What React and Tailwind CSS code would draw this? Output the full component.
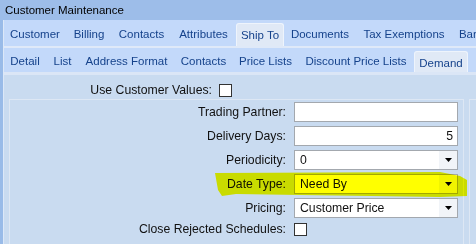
import React from 'react';

const topTabs = [
  { label: 'Customer', w: 'w-[62px]' },
  { label: 'Billing', w: 'w-[46px]' },
  { label: 'Contacts', w: 'w-[59px]' },
  { label: 'Attributes', w: 'w-[65px]' },
  { label: 'Ship To', w: 'w-[48px]', active: true },
  { label: 'Documents', w: 'w-[72px]' },
  { label: 'Tax Exemptions', w: 'w-[96px]' },
  { label: 'Bank Accounts', w: 'w-[90px]' },
];

const subTabs = [
  { label: 'Detail', w: 'w-[42px]' },
  { label: 'List', w: 'w-[33px]' },
  { label: 'Address Format', w: 'w-[95px]' },
  { label: 'Contacts', w: 'w-[59px]' },
  { label: 'Price Lists', w: 'w-[65px]' },
  { label: 'Discount Price Lists', w: 'w-[116px]' },
  { label: 'Demand', w: 'w-[54px]', active: true },
];

const Tab = ({ label, w, active }) =>
  active ? (
    <div
      className={`${w} shrink-0 mt-[3px] -mb-[2px] rounded-t-[3px] bg-[#e0e9f6] border border-b-0 border-[#eef4fc] flex justify-center pt-[3px] text-[#15428b] whitespace-nowrap`}
    >
      {label}
    </div>
  ) : (
    <div className={`${w} shrink-0 flex justify-center items-center pt-[3px] text-[#15428b] whitespace-nowrap`}>
      {label}
    </div>
  );

const Arrow = () => (
  <div className="w-[18px] h-full bg-[#f1f4f8] flex items-center justify-center">
    <svg width="7" height="4" viewBox="0 0 7 4">
      <path d="M0 0h7L3.5 4z" fill="#000" />
    </svg>
  </div>
);

const Field = ({ label, children }) => (
  <div className="flex items-center h-[20px] mb-[4px]">
    <div className="w-[284px] shrink-0 text-right pr-[8px] whitespace-nowrap">{label}</div>
    {children}
  </div>
);

const Box = ({ children, right }) => (
  <div
    className={`w-[164px] h-[20px] shrink-0 bg-white border border-[#a3a8ae] flex items-center ${
      right ? 'justify-end pr-[4px]' : 'pl-[5px]'
    }`}
  >
    {children}
  </div>
);

const Combo = ({ value }) => (
  <div className="w-[164px] h-[20px] shrink-0 bg-white border border-[#a3a8ae] flex items-center">
    <div className="flex-1 pl-[5px]">{value}</div>
    <Arrow />
  </div>
);

const Check = () => <div className="w-[13px] h-[13px] shrink-0 bg-white border border-[#333]" />;

const App = () => {
  return (
    <div className="relative w-[476px] h-[244px] overflow-hidden bg-[#c9dbf0] font-['Liberation_Sans',Arial,sans-serif] text-[12.25px] text-[#111]">
      <div className="h-[20px] bg-[#9dbde9] pl-[5px] text-[11.5px] leading-[21px] text-black">Customer Maintenance</div>

      <div className="flex h-[224px]">
        <div className="w-[3px] shrink-0 bg-[#99bbe8]" />
        <div className="flex-1 min-w-0 border-l border-[#dce8f8] flex flex-col">
          <div className="h-[28px] bg-[#c3d9fa] border-b-2 border-[#dfe9f8] flex text-[11.5px] overflow-hidden">
            {topTabs.map((t) => (
              <Tab key={t.label} {...t} />
            ))}
          </div>
          <div className="h-[27px] bg-[#c3d9fa] border-b-[3px] border-[#dbe6f6] flex text-[11.5px] overflow-hidden">
            {subTabs.map((t) => (
              <Tab key={t.label} {...t} />
            ))}
          </div>

          <div className="flex items-center h-[14px] mt-[8px]">
            <div className="w-[208px] shrink-0 text-right whitespace-nowrap">Use Customer Values:</div>
            <div className="ml-[7px]">
              <Check />
            </div>
          </div>

          <div className="flex mt-[2px] flex-1">
            <div className="ml-[5px] w-[455px] shrink-0 border border-b-0 border-[#dde7f4] pt-[2px]">
              <Field label="Trading Partner:">
                <Box />
              </Field>
              <Field label="Delivery Days:">
                <Box right>5</Box>
              </Field>
              <Field label="Periodicity:">
                <Combo value="0" />
              </Field>
              <Field label="Date Type:">
                <Combo value="Need By" />
              </Field>
              <Field label="Pricing:">
                <Combo value="Customer Price" />
              </Field>
              <div className="flex items-center h-[14px]">
                <div className="w-[284px] shrink-0 text-right pr-[8px] whitespace-nowrap">Close Rejected Schedules:</div>
                <Check />
              </div>
            </div>
            <div className="ml-[5px] flex-1 border border-r-0 border-b-0 border-[#dde7f4]" />
          </div>
        </div>
      </div>

      {/* highlighter mark over Date Type row */}
      <svg className="absolute inset-0 pointer-events-none mix-blend-multiply" width="476" height="244">
        <path
          d="M215 173 L440 172 L460 176 L467 180 L467 196 L440 197 L300 195 L236 194 L222 196 L218 190 Z"
          fill="#ffff00"
        />
      </svg>
    </div>
  );
};

export default App;
